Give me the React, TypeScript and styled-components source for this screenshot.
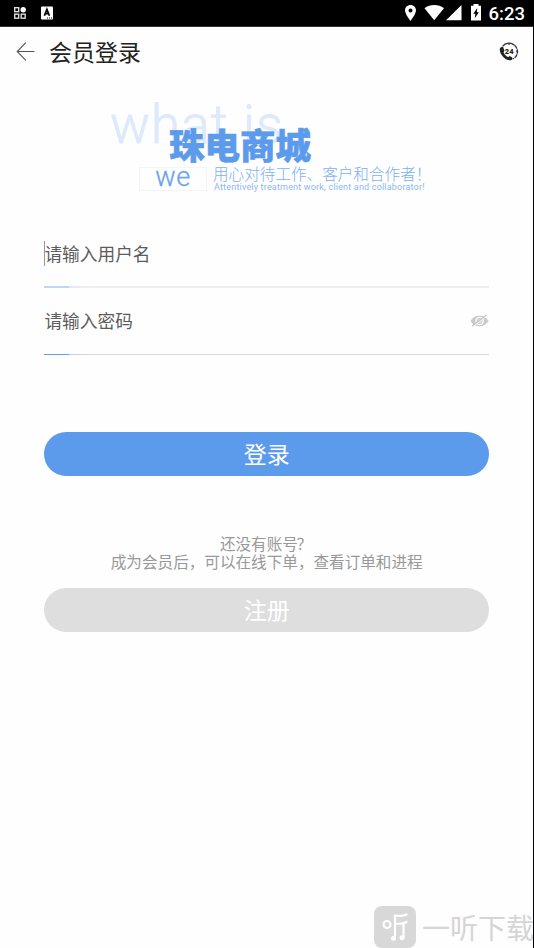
import React from "react";
import styled, { createGlobalStyle } from "styled-components";

const BLUE = "#5c9aeb";

const GlobalStyle = createGlobalStyle`
  * { box-sizing: border-box; }
  body { margin: 0; background: #fff; font-family: Roboto, "Noto Sans CJK SC", sans-serif; }
`;

const Screen = styled.div`
  position: relative;
  width: 534px;
  height: 948px;
  overflow: hidden;
  background: #fefefe;
  border-right: 1px solid #000;
  display: flex;
  flex-direction: column;
`;

const StatusBar = styled.div`
  flex: none;
  height: 27px;
  background: #000;
  border-bottom: 1px solid #333;
  display: flex;
  align-items: center;
  justify-content: space-between;
  padding: 0 8px 0 13px;
`;

const StatusGroup = styled.div<{ $gap: number }>`
  display: flex;
  align-items: center;
  gap: ${(p) => p.$gap}px;
`;

const Clock = styled.span`
  color: #fff;
  font: 500 18.5px/27px Roboto, sans-serif;
  margin-left: 7px;
  padding-top: 2px;
`;

const Header = styled.header`
  flex: none;
  height: 49px;
  display: flex;
  align-items: center;
  padding: 0 14px 0 16px;
`;

const Title = styled.h1`
  flex: 1;
  margin: -2px 0 0 13px;
  font: 400 23px/32px "Noto Sans CJK SC", sans-serif;
  color: #222;
`;

const Banner = styled.section`
  flex: none;
  position: relative;
  height: 129px;
`;

const Backdrop = styled.span`
  position: absolute;
  left: 110px;
  top: 18px;
  font: 300 53px/62px Roboto, sans-serif;
  letter-spacing: 1.1px;
  color: #deeafc;
  -webkit-text-stroke: 0.9px #deeafc;
  white-space: pre;
`;

const Brand = styled.strong`
  position: absolute;
  left: 169px;
  top: 42px;
  font: 900 35.5px/52px "Noto Sans CJK SC", sans-serif;
  color: ${BLUE};
  -webkit-text-stroke: 0.6px ${BLUE};
`;

const WeBox = styled.span`
  position: absolute;
  left: 139px;
  top: 91px;
  width: 68px;
  height: 24px;
  border: 1px solid #f0f5fd;
  text-align: center;
  font: 300 27px/19px Roboto, sans-serif;
  letter-spacing: 0.5px;
  color: #6aa3ee;
  -webkit-text-stroke: 0.3px #6aa3ee;
`;

const Slogan = styled.span`
  position: absolute;
  left: 213px;
  top: 85px;
  font: 300 15.6px/24px "Noto Sans CJK SC", sans-serif;
  color: #7db0f2;
  white-space: nowrap;
`;

const SloganEnglish = styled.span`
  position: absolute;
  left: 214px;
  top: 105px;
  font: 400 9px/12px Roboto, sans-serif;
  letter-spacing: 0.19px;
  color: #8cb9f3;
  white-space: nowrap;
`;

const Form = styled.form`
  flex: none;
  display: flex;
  flex-direction: column;
  padding: 0 44px 0 44.4px;
`;

const Field = styled.div<{ $height: number; $top: number }>`
  display: flex;
  align-items: flex-start;
  justify-content: space-between;
  height: ${(p) => p.$height}px;
  padding-top: ${(p) => p.$top}px;
`;

const FieldHint = styled.span<{ $focused?: boolean }>`
  position: relative;
  font: 400 17.7px/32px "Noto Sans CJK SC", sans-serif;
  color: #5c5c5c;
  &::before {
    content: "";
    display: ${(p) => (p.$focused ? "block" : "none")};
    position: absolute;
    left: 0;
    top: 4px;
    width: 1px;
    height: 25px;
    background: #999;
  }
`;

const Underline = styled.div<{ $soft?: boolean }>`
  height: ${(p) => (p.$soft ? 2 : 1)}px;
  opacity: ${(p) => (p.$soft ? 0.42 : 1)};
  background: linear-gradient(90deg, #5c9ff5 0 25px, #b4cff0 25px, #dadada 48px);
`;

const EyeSlot = styled.span`
  display: flex;
  margin: 10px 0 0;
`;

const PillButton = styled.button<{ $muted?: boolean }>`
  flex: none;
  height: 44px;
  border: 0;
  border-radius: 22px;
  padding: 0 0 2px;
  background: ${(p) => (p.$muted ? "#dedede" : BLUE)};
  color: #fff;
  font: 400 23px/42px "Noto Sans CJK SC", sans-serif;
  margin-top: ${(p) => (p.$muted ? 18 : 77)}px;
`;

const Note = styled.p`
  margin: 58px 0 0;
  text-align: center;
  font: 400 15.6px/18px "Noto Sans CJK SC", sans-serif;
  color: #999;
  white-space: nowrap;
`;

const NoteLead = styled.span`
  display: block;
`;

const QuestionMark = styled.span`
  margin: 0 1.5px 0 -1.5px;
`;

const Watermark = styled.div`
  position: absolute;
  left: 374px;
  top: 906px;
  display: flex;
  align-items: center;
  gap: 6px;
  font: 400 28px/42px "Noto Sans CJK SC", sans-serif;
  color: #d5d5d5;
  white-space: nowrap;
`;

const NotificationIcons = () => (
  <StatusGroup $gap={13}>
    <svg width="14" height="14" viewBox="0 0 14 14" fill="none" stroke="#ddd" strokeWidth="1.4">
      <rect x="1.7" y="1.7" width="4" height="4" />
      <rect x="1.7" y="8.2" width="4" height="4" />
      <rect x="8.2" y="8.2" width="4" height="4" />
      <circle cx="10.2" cy="3.7" r="2.7" fill="#fff" stroke="none" />
    </svg>
    <svg width="13" height="14" viewBox="0 0 13 14">
      <rect x="1" y="0.5" width="12" height="13" rx="1" fill="#fff" />
      <path d="M4.4 9.7 6.9 3.3 9.4 9.7M5.4 7.6h3" fill="none" stroke="#000" strokeWidth="1.7" />
      <path d="M7 12h1M9 12h1M11 12h1" stroke="#000" />
    </svg>
  </StatusGroup>
);

const SystemIcons = () => (
  <StatusGroup $gap={0}>
    <svg width="78" height="18" viewBox="0 0 78 18" fill="#fff">
      <path fillRule="evenodd" d="M6.5 1C3.4 1 1 3.3 1 6.3 1 10.3 6.5 17 6.5 17S12 10.3 12 6.3C12 3.3 9.6 1 6.5 1Zm0 3.4a2 2 0 1 1 0 4 2 2 0 0 1 0-4Z" />
      <path d="M20.5 4.3C26-.1 34.5-.1 40 4.3L30.2 16.3Z" />
      <path d="M57.5 1V16.3H42Z" />
      <path fillRule="evenodd" d="M69.5 0h5v1.7H77V16.5H67V1.7h2.5ZM73.3 4 69.3 9.8h2.1L70.8 14.3 74.9 8.3h-2.1Z" />
    </svg>
    <Clock>6:23</Clock>
  </StatusGroup>
);

const BackIcon = () => (
  <svg width="20" height="20" viewBox="0 0 20 20" fill="none" stroke="#555" strokeWidth="1.1">
    <path d="M9.8.7 1.2 9.5 9.8 18.3M1.2 9.5H18.5" />
  </svg>
);

const SupportIcon = () => (
  <svg width="20" height="20" viewBox="0 0 20 20" fill="none">
    <path d="M3.5 4.3A8 8 0 0 1 15.5 3.3" stroke="#333" strokeWidth="1.3" />
    <path d="M15.5 3.3A8 8 0 0 1 13.5 17" stroke="#333" strokeWidth="1.3" strokeDasharray="4.2 .7" />
    <path d="M17 9.2h2M10 1v2" stroke="#333" strokeWidth="1.2" />
    <path d="M1 6.3C0 9 2 13 4.5 15.3 7 17.8 10.5 19 13 17.7L13.3 15.5 10.7 14 9.3 15.1C7.5 14.5 5.3 12.3 4.6 10.4L5.4 8.8 4.3 5.3C3.3 4.5 1.8 5 1 6.3Z" fill="#222" />
    <text x="5.8" y="11.8" fontFamily="Roboto" fontSize="7.5" fontWeight="900" fill="#222">24</text>
  </svg>
);

const HiddenEyeIcon = () => (
  <svg width="19" height="14" viewBox="0 0 19 14">
    <path d="M.5 7C4.5 0 14.5 0 18.5 7 14.5 14 4.5 14 .5 7Z" fill="#c9c9c9" />
    <circle cx="9.5" cy="7" r="3.7" fill="#d4d4d4" stroke="#fff" strokeWidth="1.2" />
    <path d="M2.5 13 17 2" stroke="#fff" strokeWidth="1" />
    <path d="M2 12 16.5 1" stroke="#c4c4c4" strokeWidth="1.2" />
  </svg>
);

const WatermarkIcon = () => (
  <svg width="42" height="42" viewBox="0 0 42 42">
    <rect width="42" height="42" rx="8" fill="#d8d8d8" />
    <g fill="none" stroke="#fff" strokeWidth="2.2" strokeLinecap="round">
      <circle cx="13" cy="18.5" r="3.5" />
      <path d="M32.5 8.5C29 10.5 25 10 21 9.5V32M21.5 17.5C25 18 29 18 32.5 16M29.5 18V31" />
    </g>
    <circle cx="19.5" cy="32.2" r="2.5" fill="#fff" />
    <circle cx="28" cy="31.8" r="2.5" fill="#fff" />
  </svg>
);

export default function App() {
  return (
    <>
      <GlobalStyle />
      <Screen>
        <StatusBar>
          <NotificationIcons />
          <SystemIcons />
        </StatusBar>
        <Header>
          <BackIcon />
          <Title>会员登录</Title>
          <SupportIcon />
        </Header>
        <Banner>
          <Backdrop>what is</Backdrop>
          <Brand>珠电商城</Brand>
          <WeBox>we</WeBox>
          <Slogan>用心对待工作、客户和合作者！</Slogan>
          <SloganEnglish>Attentively treatment work, client and collaborator!</SloganEnglish>
        </Banner>
        <Form>
          <Field $height={81} $top={32}>
            <FieldHint $focused>请输入用户名</FieldHint>
          </Field>
          <Underline $soft />
          <Field $height={66} $top={16}>
            <FieldHint>请输入密码</FieldHint>
            <EyeSlot>
              <HiddenEyeIcon />
            </EyeSlot>
          </Field>
          <Underline />
          <PillButton type="button">登录</PillButton>
          <Note>
            <NoteLead>
              还没有账号<QuestionMark>？</QuestionMark>
            </NoteLead>
            成为会员后，可以在线下单，查看订单和进程
          </Note>
          <PillButton type="button" $muted>
            注册
          </PillButton>
        </Form>
        <Watermark>
          <WatermarkIcon />
          一听下载
        </Watermark>
      </Screen>
    </>
  );
}
